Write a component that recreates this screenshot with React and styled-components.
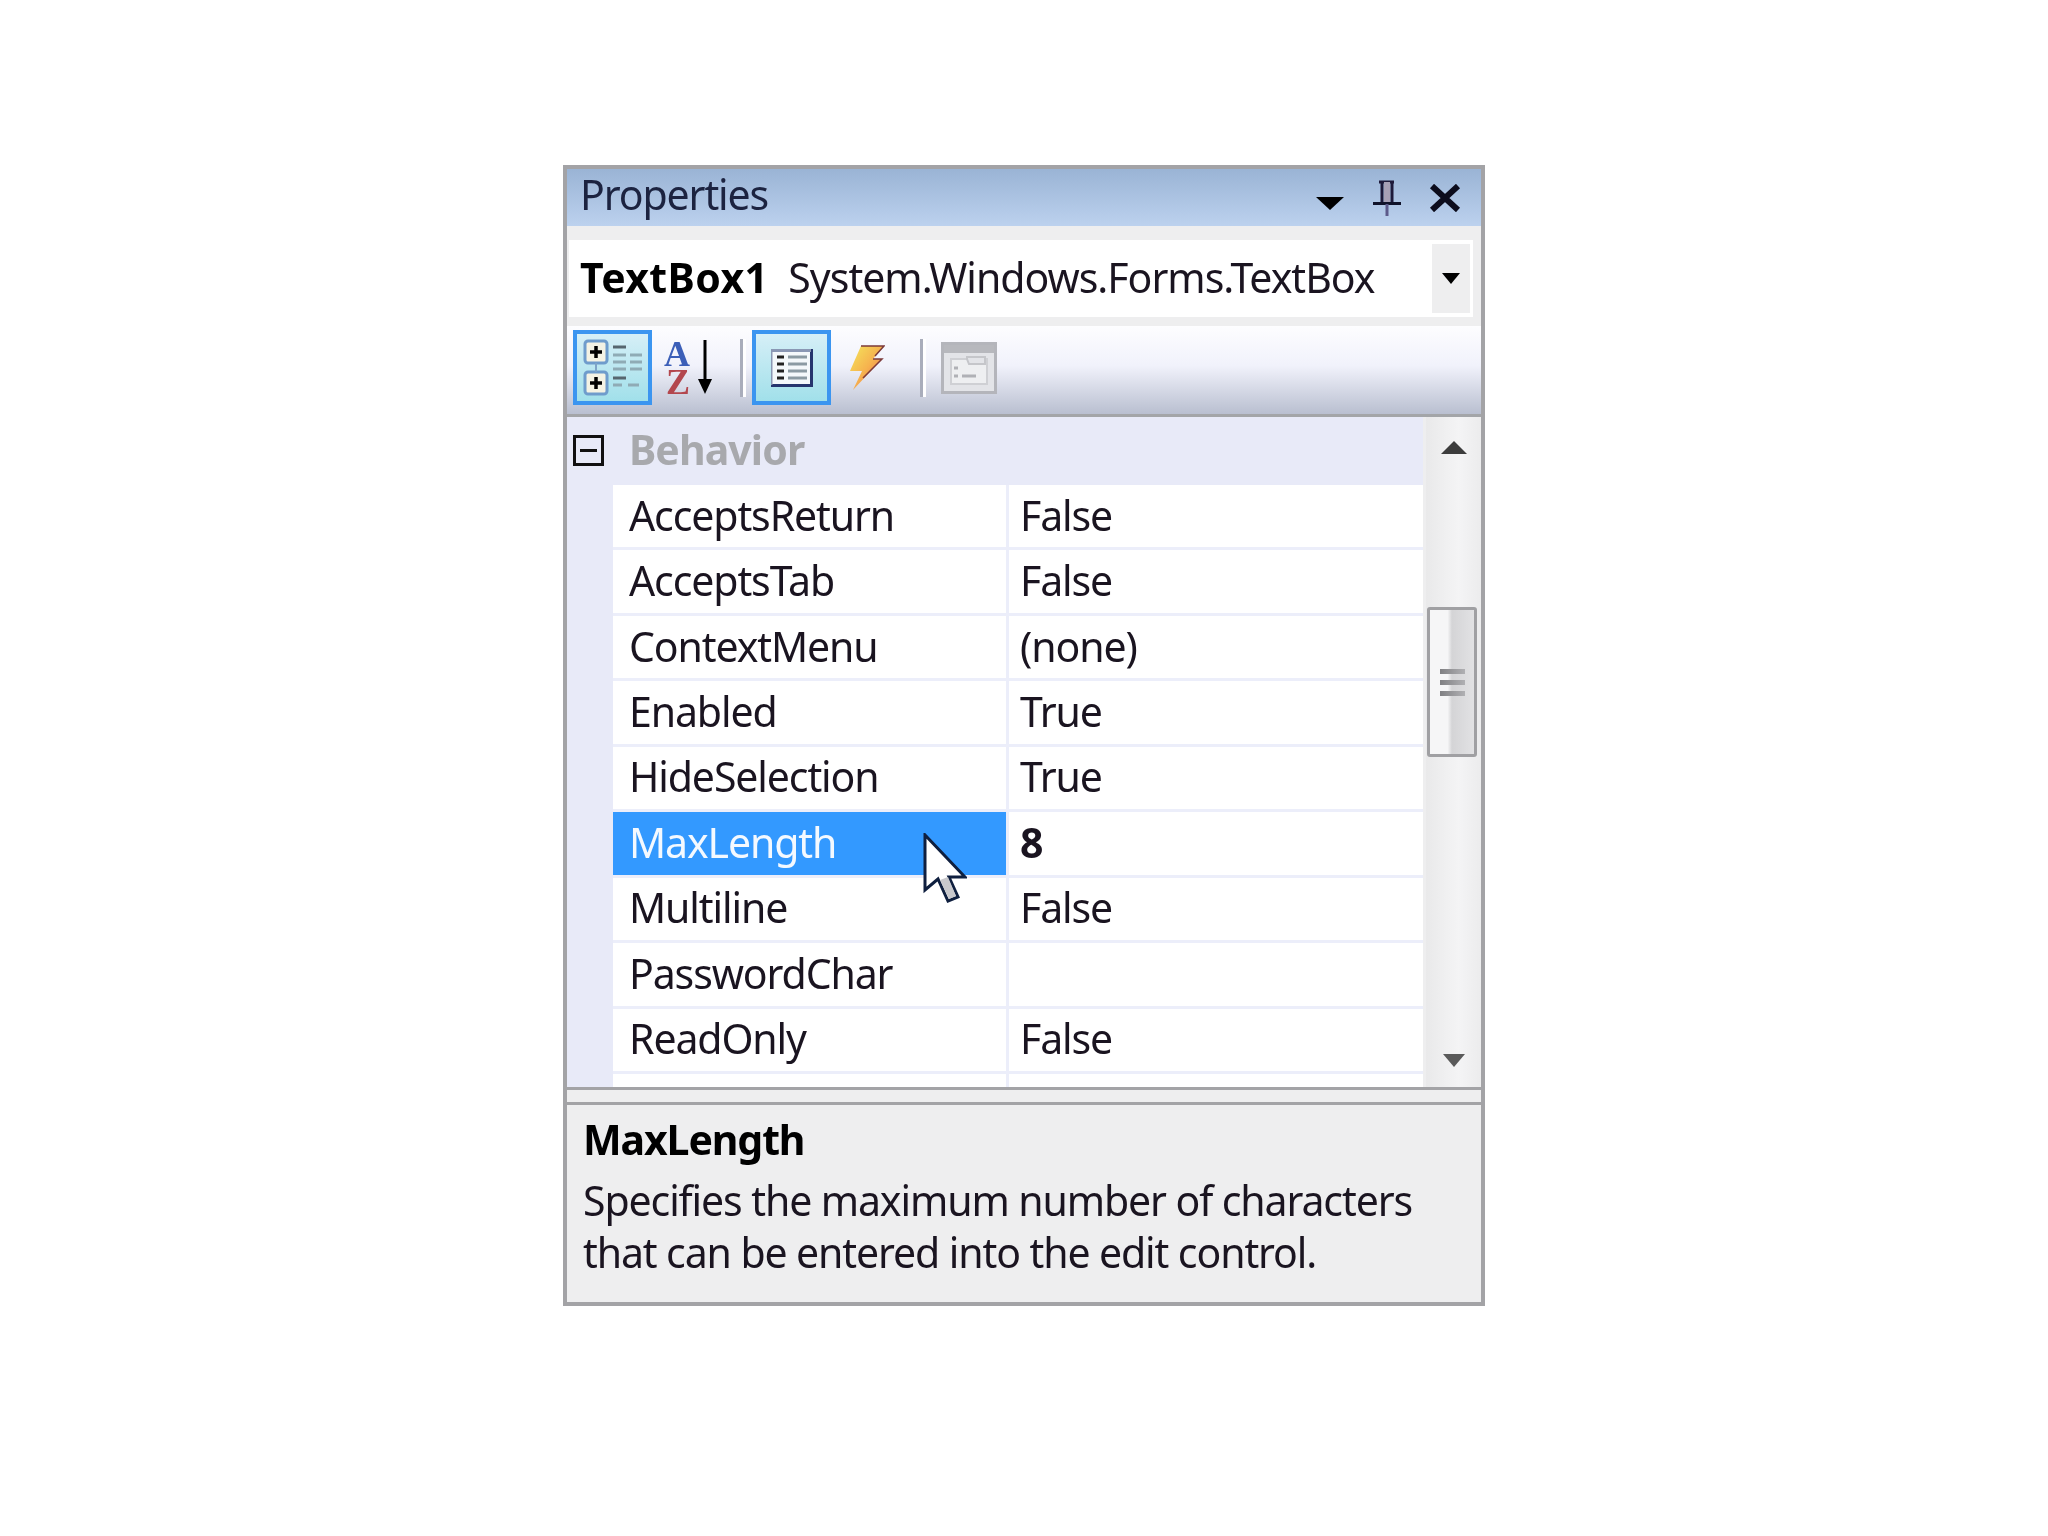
import React from "react";
import styled, { createGlobalStyle } from "styled-components";

const FONT = `"Noto Sans", "Liberation Sans", sans-serif`;

const rows = [
  { name: "AcceptsReturn", value: "False" },
  { name: "AcceptsTab", value: "False" },
  { name: "ContextMenu", value: "(none)" },
  { name: "Enabled", value: "True" },
  { name: "HideSelection", value: "True" },
  { name: "MaxLength", value: "8", selected: true },
  { name: "Multiline", value: "False" },
  { name: "PasswordChar", value: "" },
  { name: "ReadOnly", value: "False" },
];

const Categorized = () => (
  <svg width="62" height="60" viewBox="0 0 62 60">
    {[3, 34].map((y) => (
      <g key={y}>
        <rect x="3" y={y} width="22" height="22" rx="3" fill="#f4f2e4" stroke="#6f9ccc" strokeWidth="3" />
        <path d={`M8 ${y + 11}h12M14 ${y + 5}v12`} stroke="#000" strokeWidth="3.5" />
      </g>
    ))}
    <path d="M31 9h13M31 40h13" stroke="#56666f" strokeWidth="3" />
    <path d="M31 17h13M48 17h12M31 24h13M48 24h12M31 31h13M48 31h12M31 47h9M46 47h11" stroke="#8fabb5" strokeWidth="3" />
    <path d="M14 25v9" stroke="#7fa4c8" strokeWidth="2" />
  </svg>
);

const SortIcon = () => (
  <svg width="56" height="60" viewBox="0 0 56 60" overflow="visible">
    <text x="1" y="28" fontFamily="Liberation Serif" fontWeight="700" fontSize="36" fill="#3c5fb8">A</text>
    <text x="3" y="56" fontFamily="Liberation Serif" fontWeight="700" fontSize="36" fill="#b3474e">Z</text>
    <path d="M42 2v44" stroke="#000" strokeWidth="3" />
    <path d="M35 41h14l-7 15z" fill="#000" />
  </svg>
);

const PagesIcon = () => (
  <svg width="42" height="38" viewBox="0 0 42 38">
    <rect width="42" height="38" fill="#f4f8fb" />
    <path d="M40.5 0v36.5H0" fill="none" stroke="#26356e" strokeWidth="3" />
    <path d="M0 36V1.5h40" fill="none" stroke="#8a97b4" strokeWidth="3" />
    <path d="M6 8h7M6 15h7M6 22h7M6 29h7" stroke="#222" strokeWidth="3" />
    <path d="M17 8h19M17 15h19M17 22h19M17 29h19" stroke="#8b9aa3" strokeWidth="3" />
  </svg>
);

const BoltIcon = () => (
  <svg width="36" height="46" viewBox="0 0 36 46">
    <defs>
      <linearGradient id="bolt" x1="0" y1="0" x2="1" y2="1">
        <stop offset="0" stopColor="#f4e65c" />
        <stop offset="0.5" stopColor="#f6b24e" />
        <stop offset="1" stopColor="#e85f4c" />
      </linearGradient>
    </defs>
    <path d="M12 1h23L24 14h9L4 45l9-19H1z" fill="url(#bolt)" />
    <path d="M12 1h23L26 11M24 14h9L14 33" stroke="#7c3a3a" strokeWidth="1.5" fill="none" />
  </svg>
);

const DisabledPagesIcon = () => (
  <svg width="56" height="52" viewBox="0 0 56 52">
    <rect x="1.5" y="1.5" width="53" height="49" fill="#e3e4e8" stroke="#b4b5bb" strokeWidth="3" />
    <rect x="3" y="3" width="50" height="8" fill="#b7b8bd" />
    <path d="M10 17h36v25H10z" fill="#eeeff1" stroke="#cfd0d4" strokeWidth="2" />
    <path d="M26 17v-2h18v7H28z" fill="#e3e4e8" stroke="#c5c6ca" strokeWidth="2" />
    <path d="M13 26h4M13 34h4M21 34h14" stroke="#b0b1b6" strokeWidth="3" />
  </svg>
);

const PinIcon = () => (
  <svg width="30" height="36" viewBox="0 0 30 36">
    <path d="M7 2h15M10 2v22M20 2v22" stroke="#1e1a3a" strokeWidth="3" fill="none" />
    <path d="M12 2h6v20h-6z" fill="#a7a0b5" />
    <path d="M1 23.5h28" stroke="#10132a" strokeWidth="3" />
    <path d="M15 24v12" stroke="#5c5a8a" strokeWidth="3" />
  </svg>
);

const CloseIcon = () => (
  <svg width="32" height="28" viewBox="0 0 32 28">
    <path d="M3 2l26 24M29 2L3 26" stroke="#0c0c1c" strokeWidth="6" />
  </svg>
);

const Triangle = ({ w, h, up, color = "#000" }) => (
  <svg width={w} height={h} viewBox="0 0 10 10" preserveAspectRatio="none">
    <path d={up ? "M5 0L10 10H0z" : "M0 0H10L5 10z"} fill={color} />
  </svg>
);

const Cursor = () => (
  <svg width="44" height="72" viewBox="0 0 44 72">
    <path d="M2 2V57L15 46L25 68L35 64L26 44H42z" fill="#fff" stroke="#0f1f3f" strokeWidth="3" />
    <path d="M17 47L26 66L33 63L25 44z" fill="#c8c8cc" />
  </svg>
);

export default function App() {
  return (
    <>
      <GlobalStyle />
      <Page>
        <Panel>
          <TitleBar>
            <TitleText>Properties</TitleText>
            <TitleIcons>
              <MenuArrow>
                <Triangle w={28} h={13} />
              </MenuArrow>
              <PinIcon />
              <CloseIcon />
            </TitleIcons>
          </TitleBar>
          <ComboBand>
            <Combo>
              <ComboName>TextBox1</ComboName>
              <ComboType>System.Windows.Forms.TextBox</ComboType>
              <ComboButton>
                <Triangle w={18} h={11} />
              </ComboButton>
            </Combo>
          </ComboBand>
          <Toolbar>
            <ToolButton $active>
              <Categorized />
            </ToolButton>
            <ToolButton $pad="0 21px 0 11px">
              <SortIcon />
            </ToolButton>
            <Separator $after="9px" />
            <ToolButton $active>
              <PagesIcon />
            </ToolButton>
            <ToolButton $pad="0 35px 0 18px">
              <BoltIcon />
            </ToolButton>
            <Separator $after="18px" />
            <ToolButton>
              <DisabledPagesIcon />
            </ToolButton>
          </Toolbar>
          <GridArea>
            <PropertyGrid>
              <CategoryRow>
                <Expander />
                <CategoryName>Behavior</CategoryName>
              </CategoryRow>
              {rows.map((row) => (
                <Row key={row.name}>
                  <NameCell $selected={row.selected}>
                    <CellText>{row.name}</CellText>
                    {row.selected && (
                      <CursorSpot>
                        <Cursor />
                      </CursorSpot>
                    )}
                  </NameCell>
                  <ValueCell $bold={row.selected}>
                    <CellText>{row.value}</CellText>
                  </ValueCell>
                </Row>
              ))}
              <Row $partial>
                <NameCell />
                <ValueCell />
              </Row>
            </PropertyGrid>
            <ScrollBar>
              <ScrollArrow>
                <Triangle w={26} h={13} up color="#3c3c3c" />
              </ScrollArrow>
              <Thumb>
                <Grip />
                <Grip />
                <Grip />
              </Thumb>
              <ScrollArrow $down>
                <Triangle w={22} h={13} color="#5a5a5a" />
              </ScrollArrow>
            </ScrollBar>
          </GridArea>
          <Splitter />
          <Description>
            <DescTitle>MaxLength</DescTitle>
            <DescText>
              Specifies the maximum number of characters
              <br />
              that can be entered into the edit control.
            </DescText>
          </Description>
        </Panel>
      </Page>
    </>
  );
}

const GlobalStyle = createGlobalStyle`
  html, body {
    margin: 0;
    background: #fff;
  }
`;

const Page = styled.div`
  width: 2048px;
  height: 1536px;
  padding: 165px 0 0 563px;
  box-sizing: border-box;
  font-family: ${FONT};
`;

const Panel = styled.div`
  width: 922px;
  height: 1141px;
  box-sizing: border-box;
  border: 4px solid #a3a3a6;
  background: #eeeeef;
  display: flex;
  flex-direction: column;
  color: #1a1420;
  font-size: 41px;
  letter-spacing: -1.1px;
  filter: blur(0.6px);
`;

const TitleBar = styled.div`
  height: 57px;
  flex: none;
  background: linear-gradient(#9ab4d5, #bcd1ee);
  display: flex;
  align-items: center;
  justify-content: space-between;
  padding: 0 19px 0 13px;
`;

const TitleText = styled.span`
  color: #1c2340;
  margin-top: -7px;
`;

const TitleIcons = styled.div`
  display: flex;
  align-items: center;
  gap: 27px;
  margin-right: 1px;
`;

const MenuArrow = styled.div`
  line-height: 0;
  margin-top: 8px;
  margin-right: 1px;
`;

const ComboBand = styled.div`
  height: 100px;
  flex: none;
  padding: 14px 8px 9px 2px;
  box-sizing: border-box;
`;

const Combo = styled.div`
  height: 100%;
  background: #fff;
  display: flex;
  align-items: center;
  padding-left: 11px;
`;

const ComboName = styled.span`
  font-weight: 700;
  color: #000;
  letter-spacing: 0.4px;
  margin-top: -4px;
`;

const ComboType = styled.span`
  margin-left: 20px;
  letter-spacing: -1px;
  margin-top: -4px;
`;

const ComboButton = styled.div`
  margin-left: auto;
  margin-right: 3px;
  width: 38px;
  height: 69px;
  background: #eeeeef;
  display: flex;
  align-items: center;
  justify-content: center;
`;

const Toolbar = styled.div`
  height: 91px;
  flex: none;
  box-sizing: border-box;
  background: linear-gradient(#fdfdff, #f1f2fb 45%, #b9bfd0);
  border-bottom: 3px solid #a3a5a8;
  display: flex;
  align-items: flex-start;
  padding: 4px 0 0 6px;
`;

const ToolButton = styled.div`
  width: ${(p) => (p.$active ? "79px" : "auto")};
  height: 75px;
  box-sizing: border-box;
  display: flex;
  align-items: center;
  justify-content: center;
  border: ${(p) => (p.$active ? "4px solid #3b95f0" : "none")};
  background: ${(p) => (p.$active ? "linear-gradient(#d6eff7, #a1e0ea)" : "transparent")};
  padding: ${(p) => p.$pad || "0"};
`;

const Separator = styled.div`
  width: 3px;
  height: 58px;
  margin: 9px ${(p) => p.$after} 0 0;
  background: #a9adbb;
  box-shadow: 3px 0 0 #fff;
`;

const GridArea = styled.div`
  height: 670px;
  flex: none;
  display: flex;
  overflow: hidden;
  border-bottom: 3px solid #a3a3a6;
`;

const PropertyGrid = styled.div`
  width: 856px;
  flex: none;
  background: linear-gradient(90deg, #e8eaf8 46px, #fff 46px);
  overflow: hidden;
`;

const CategoryRow = styled.div`
  height: 68px;
  background: #e8eaf8;
  display: flex;
  align-items: center;
  padding-left: 6px;
`;

const Expander = styled.div`
  width: 31px;
  height: 31px;
  margin-top: -2px;
  box-sizing: border-box;
  border: 3px solid #111;
  position: relative;
  &::after {
    content: "";
    position: absolute;
    left: 4px;
    right: 4px;
    top: 11px;
    height: 3px;
    background: #111;
  }
`;

const CategoryName = styled.span`
  margin-left: 25px;
  font-weight: 700;
  color: #a8a9ad;
  letter-spacing: -0.9px;
  margin-top: -4px;
`;

const Row = styled.div`
  height: ${(p) => (p.$partial ? "20px" : "62.45px")};
  margin-left: 46px;
  border-bottom: ${(p) => (p.$partial ? "none" : "3px solid #eceefa")};
  display: flex;
  background: #fff;
`;

const CellText = styled.span`
  margin-top: -3px;
`;

const NameCell = styled.div`
  width: 396px;
  box-sizing: border-box;
  padding-left: 16px;
  display: flex;
  align-items: center;
  position: relative;
  background: ${(p) => (p.$selected ? "#3399ff" : "transparent")};
  color: ${(p) => (p.$selected ? "#f4f9ff" : "inherit")};
  border-right: 3px solid #eceefa;
`;

const ValueCell = styled.div`
  flex: 1;
  padding-left: 11px;
  display: flex;
  align-items: center;
  font-weight: ${(p) => (p.$bold ? 700 : 400)};
`;

const CursorSpot = styled.span`
  position: absolute;
  left: 310px;
  top: 21px;
  z-index: 2;
  line-height: 0;
`;

const ScrollBar = styled.div`
  flex: 1;
  margin-left: 3px;
  background: linear-gradient(90deg, #e9e9ea, #f4f4f5 60%, #ececed);
  display: flex;
  flex-direction: column;
  align-items: center;
`;

const ScrollArrow = styled.div`
  line-height: 0;
  padding-top: ${(p) => (p.$down ? "0" : "21px")};
  margin-top: ${(p) => (p.$down ? "auto" : "0")};
  margin-bottom: ${(p) => (p.$down ? "20px" : "0")};
`;

const Thumb = styled.div`
  margin-top: 153px;
  margin-right: 3px;
  width: 50px;
  height: 150px;
  box-sizing: border-box;
  border: 3px solid #a0a0a3;
  border-radius: 3px;
  background: linear-gradient(90deg, #f6f6f7 40%, #d4d4d6 50%, #e2e2e4);
  display: flex;
  flex-direction: column;
  align-items: center;
  justify-content: center;
  gap: 6px;
`;

const Grip = styled.div`
  width: 25px;
  height: 5px;
  background: linear-gradient(90deg, #808083, #b0b0b3);
`;

const Splitter = styled.div`
  height: 12px;
  flex: none;
  border-bottom: 3px solid #a3a3a6;
`;

const Description = styled.div`
  flex: 1;
  padding: 8px 12px 0 16px;
  display: flex;
  flex-direction: column;
`;

const DescTitle = styled.div`
  font-weight: 700;
  color: #000;
  line-height: 52px;
`;

const DescText = styled.div`
  line-height: 52px;
  margin-top: 9px;
`;
